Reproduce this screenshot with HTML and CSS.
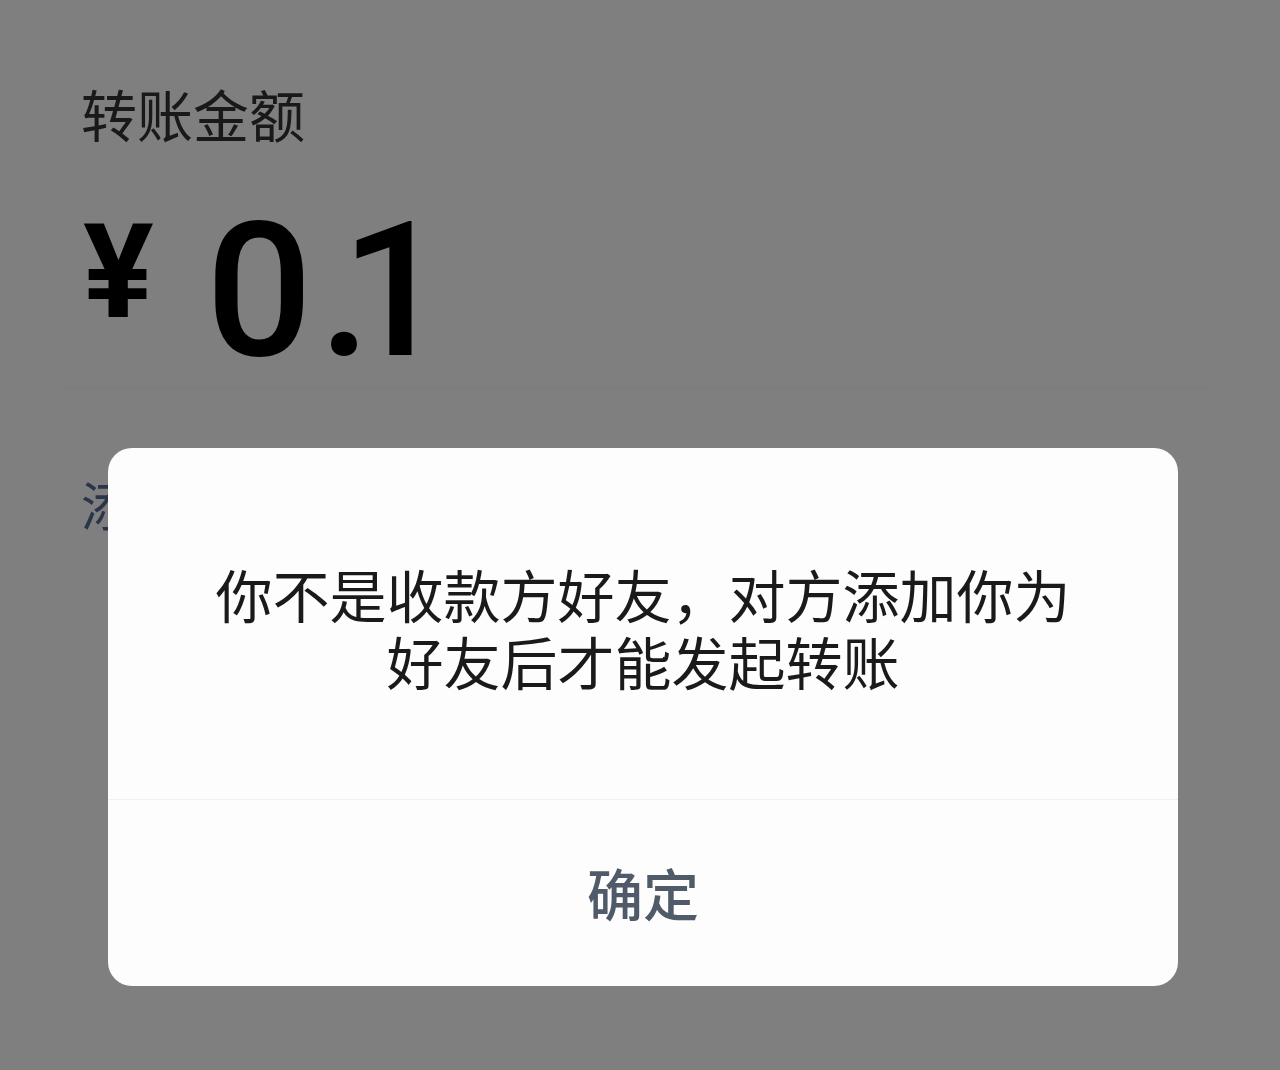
FILE: index.html
```html
<!DOCTYPE html>
<html lang="zh-CN">
<head>
<meta charset="utf-8">
<title>转账</title>
<link rel="stylesheet" href="styles.css">
</head>
<body>
<main class="page">
  <div class="label">转账金额</div>
  <div class="amount">
    <span class="yen">¥</span>
    <span class="num">0<span class="dot">.</span>1</span>
  </div>
  <div class="rule"></div>
  <div class="note">添加转账说明</div>
</main>
<div class="mask"></div>
<div class="dialog" role="dialog">
  <div class="msg">你不是收款方好友，对方添加你为<br>好友后才能发起转账</div>
  <div class="btn">确定</div>
</div>
</body>
</html>
```
FILE: styles.css
```css
html, body {
  margin: 0;
  padding: 0;
  height: 100%;
}
body {
  background: #ffffff;
  font-family: "Noto Sans CJK SC", "Noto Sans", sans-serif;
  overflow: hidden;
}
.page {
  padding: 80px 0 0 81px;
  display: flex;
  flex-direction: column;
}
.label {
  font-size: 56px;
  line-height: 66px;
  color: #333333;
}
.amount {
  display: flex;
  align-items: flex-start;
  margin-top: 60px;
  height: 160px;
}
.yen {
  font-family: Roboto, "Liberation Sans", sans-serif;
  font-weight: 700;
  font-size: 132px;
  line-height: 132px;
  color: #000;
  margin-left: 2px;
  letter-spacing: -4px;
}
.num {
  font-family: Roboto, "Liberation Sans", sans-serif;
  font-weight: 500;
  font-size: 188px;
  line-height: 188px;
  color: #000;
  margin-top: -9px;
  margin-left: 56px;
  letter-spacing: 6px;
}
.dot {
  letter-spacing: -30px;
}
.rule {
  height: 1px;
  background: #f6f6f6;
  margin: 21px 70px 0 -20px;
}
.note {
  margin-top: 86px;
  font-size: 52px;
  line-height: 60px;
  color: #576b95;
}
.mask {
  position: fixed;
  inset: 0;
  background: rgba(0, 0, 0, 0.5);
}
.dialog {
  position: fixed;
  left: 108px;
  top: 448px;
  width: 1070px;
  height: 538px;
  background: #fdfdfd;
  border-radius: 24px;
  display: flex;
  flex-direction: column;
  overflow: hidden;
}
.msg {
  height: 351px;
  display: flex;
  align-items: center;
  justify-content: center;
  text-align: center;
  font-size: 57px;
  line-height: 67px;
  color: #1a1a1a;
  padding-top: 6px;
  box-sizing: border-box;
}
.btn {
  flex: 1;
  border-top: 1px solid #f1f1f1;
  display: flex;
  align-items: center;
  justify-content: center;
  font-size: 56px;
  font-weight: 500;
  color: #4f5b68;
  padding-bottom: 4px;
}
```
